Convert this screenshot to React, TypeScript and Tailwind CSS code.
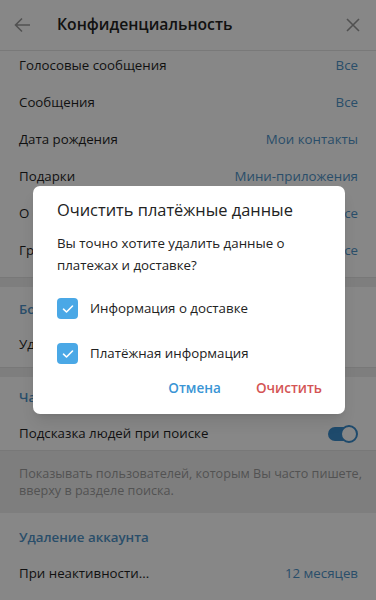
import { ReactNode } from 'react';

const font = { fontFamily: '"Open Sans", "Noto Sans", sans-serif' };

function Row({ label, value, right }: { label: string; value?: string; right?: ReactNode }) {
    return (
        <div className="flex h-[37px] items-center justify-between pl-[19px] pr-[18px] text-[13.3px]">
            <span className="text-[#1f1f1f]">{label}</span>
            {value && <span className="text-[#4f93c8]">{value}</span>}
            {right}
        </div>
    );
}

function SectionHeader({ title, top }: { title: string; top: string }) {
    return (
        <div className={`${top} h-[39px] pl-[19px] text-[13.3px] font-semibold leading-[20px] text-[#4f93c8]`}>
            {title}
        </div>
    );
}

function Divider() {
    return <div className="h-[10px] border-t border-[#e2e2e2] bg-[#efefef]" />;
}

function Toggle() {
    return (
        <div className="relative h-[18px] w-[30px]">
            <div className="absolute left-0 top-[2px] h-[14px] w-[28px] rounded-full bg-[#3a8ccc]" />
            <div className="absolute right-0 top-0 h-[18px] w-[18px] rounded-full border-2 border-[#3a8ccc] bg-white" />
        </div>
    );
}

function Check({ label }: { label: string }) {
    return (
        <div className="flex h-[45px] items-center gap-[12px]">
            <div className="flex h-[21px] w-[21px] items-center justify-center rounded-[4px] bg-[#4aa8e6]">
                <svg width="12" height="10" viewBox="0 0 12 10" fill="none">
                    <path d="M1.5 5.2 L4.5 8 L10.5 2" stroke="white" strokeWidth="1.6" strokeLinecap="round" strokeLinejoin="round" />
                </svg>
            </div>
            <span className="text-[13.3px] text-[#222]">{label}</span>
        </div>
    );
}

export default function App() {
    return (
        <div className="relative h-[600px] w-[376px] overflow-hidden bg-white" style={font}>
            {/* header */}
            <div className="relative z-10 flex h-[51px] items-center border-b border-[#e4e4e4] bg-white">
                <div className="flex w-[57px] justify-center pr-[12px]">
                    <svg width="17" height="16" viewBox="0 0 17 16" fill="none">
                        <path d="M16 8H1.5M8 1.5L1.5 8L8 14.5" stroke="#9a9a9a" strokeWidth="1.6" />
                    </svg>
                </div>
                <span className="flex-1 text-[15.7px] font-semibold text-[#222]">Конфиденциальность</span>
                <div className="pr-[16px]">
                    <svg width="14" height="14" viewBox="0 0 14 14" fill="none">
                        <path d="M1 1L13 13M13 1L1 13" stroke="#9a9a9a" strokeWidth="1.6" />
                    </svg>
                </div>
            </div>

            <div className="-mt-[4px]">
                <Row label="Голосовые сообщения" value="Все" />
                <Row label="Сообщения" value="Все" />
                <Row label="Дата рождения" value="Мои контакты" />
                <Row label="Подарки" value="Мини-приложения" />
                <Row label="О себе" value="Все" />
                <Row label="Группы" value="Все" />
                <div className="h-[8px]" />
                <Divider />
                <SectionHeader title="Боты и веб-сайты" top="pt-[12px]" />
                <Row label="Удалить платёжные данные" />
                <div className="h-[4px]" />
                <Divider />
                <SectionHeader title="Чаты" top="pt-[10px]" />
                <div className="-mt-[1px]">
                    <Row label="Подсказка людей при поиске" right={<Toggle />} />
                </div>
                <div className="-mt-[2px] h-[63px] border-t border-[#e2e2e2] bg-[#efefef] pl-[19px] pr-[10px] pt-[14px] text-[12.6px] leading-[17px] text-[#9c9c9c]">
                    Показывать пользователей, которым Вы часто пишете, вверху в разделе поиска.
                </div>
                <SectionHeader title="Удаление аккаунта" top="pt-[14px] h-[42px]" />
                <Row label="При неактивности..." value="12 месяцев" />
            </div>

            {/* overlay */}
            <div className="absolute inset-0 z-20 bg-black/[0.47]" />

            {/* dialog */}
            <div className="absolute left-[33px] top-[186px] z-30 h-[228px] w-[312px] rounded-[7px] bg-white px-[24px] pt-[12px] shadow-lg">
                <div className="text-[16.4px] font-medium leading-[24px] text-[#222]">Очистить платёжные данные</div>
                <div className="mt-[10px] text-[13.3px] leading-[22px] text-[#222]">
                    Вы точно хотите удалить данные о<br />платежах и доставке?
                </div>
                <div className="mt-[10px]">
                    <Check label="Информация о доставке" />
                    <Check label="Платёжная информация" />
                </div>
                <div className="-mr-[1px] mt-[2px] flex justify-end gap-[35px] text-[13.5px] font-semibold leading-[20px]">
                    <span className="text-[#3a95d5]">Отмена</span>
                    <span className="text-[#d45454]">Очистить</span>
                </div>
            </div>
        </div>
    );
}
